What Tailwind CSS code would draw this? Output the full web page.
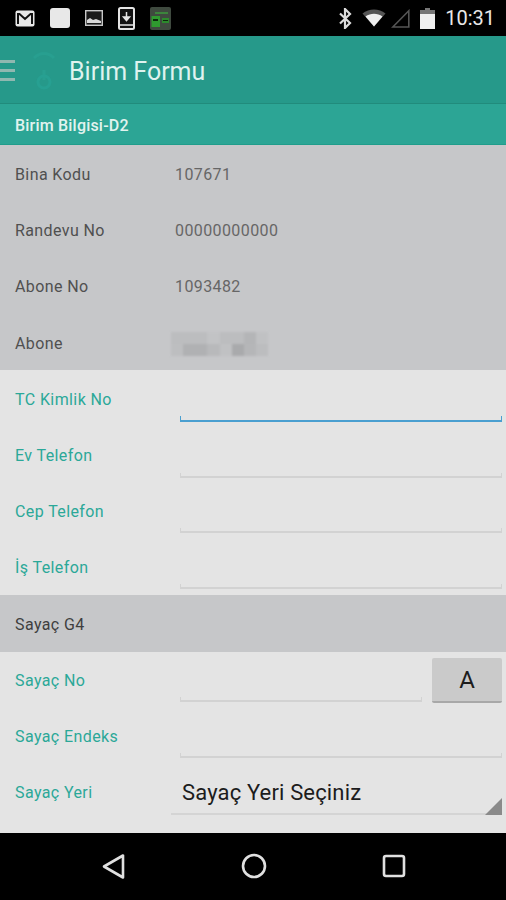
<!DOCTYPE html>
<html lang="tr">
<head>
  <meta charset="UTF-8" />
  <meta name="viewport" content="width=device-width, initial-scale=1.0" />
  <title>Birim Formu</title>
  <script src="https://cdn.jsdelivr.net/npm/@tailwindcss/browser@4"></script>
</head>
<body class="bg-black font-['Roboto',sans-serif] overflow-hidden">
  <div class="w-[506px] h-[900px] flex flex-col">

    <!-- status bar -->
    <div class="h-9 bg-black flex items-center justify-between pl-[15px] pr-[11px] shrink-0">
      <div class="flex items-center gap-[15px]">
        <svg class="w-5 h-[17px]" viewBox="0 0 20 17"><rect x="0.5" y="0.5" width="19" height="16" rx="2" fill="#e8e8e8"/><path d="M3 14V4h1.5L10 9l5.5-5H17v10" fill="none" stroke="#111" stroke-width="2"/></svg>
        <div class="w-5 h-5 rounded-[3px] bg-[#e8e8e8]"></div>
        <svg class="w-[18px] h-4" viewBox="0 0 18 16"><rect x="0.7" y="0.7" width="16.6" height="14.6" fill="#1a1a1a" stroke="#c8c8c8" stroke-width="1.4"/><path d="M2 13V10l3-2 3 2 3-1 5 2v2z" fill="#d8d8d8"/></svg>
        <svg class="w-[17px] h-[23px]" viewBox="0 0 17 23"><rect x="1" y="1" width="15" height="21" rx="1.5" fill="#111" stroke="#e4e4e4" stroke-width="2"/><path d="M8.5 5v6M5.5 10h6l-3 3.5z" fill="#e4e4e4" stroke="#e4e4e4" stroke-width="1.5"/><path d="M2 18h13" stroke="#e4e4e4" stroke-width="1.5"/></svg>
        <svg class="w-[21px] h-[23px]" viewBox="0 0 21 23"><rect width="21" height="23" rx="2" fill="#3f4a3f"/><path d="M5 6h13" stroke="#3c9a3c" stroke-width="1.5"/><rect x="1.5" y="9" width="8.5" height="11" fill="#2f9a2f"/><rect x="12" y="11" width="7" height="5" fill="#2c8a2c"/><path d="M3 13h5" stroke="#0c2a0c" stroke-width="2"/><path d="M13 13.5h5" stroke="#0c2a0c"/></svg>
      </div>
      <div class="flex items-center">
        <svg class="w-[13px] h-[21px] mr-[10px]" viewBox="0 0 13 21"><path d="M1 5.5l10 9.5-5 5V1l5 5-10 9.5" fill="none" stroke="#dcdcdc" stroke-width="2.2"/></svg>
        <svg class="w-6 h-[18px] mr-[5px]" viewBox="0 0 24 18"><path d="M0.5 4.5C7 -0.8 17 -0.8 23.5 4.5L12 17.5z" fill="#555"/><path d="M3.5 7.5c5-3.6 12-3.6 17 0L12 17.5z" fill="#f0f0f0"/></svg>
        <svg class="w-[19px] h-[19px] mr-[10px]" viewBox="0 0 19 19"><path d="M17.8 1.8V18H1.8z" fill="none" stroke="#555" stroke-width="1.6"/></svg>
        <svg class="w-[15px] h-[21px] mr-[10px]" viewBox="0 0 15 21"><path d="M5 0h5v2h5v19H0V2h5z" fill="#777"/><rect y="6" width="15" height="15" fill="#f0f0f0"/></svg>
        <span class="text-[#e8e8e8] text-[20px] leading-none font-normal">10:31</span>
      </div>
    </div>

    <!-- app bar -->
    <header class="h-[68px] bg-[#26998a] flex items-center shrink-0 border-b border-[#218b7c] pt-[2px]">
      <div class="w-[15px] flex flex-col gap-[6px] shrink-0">
        <div class="h-[3px] bg-[#8fb8b0]"></div>
        <div class="h-[3px] bg-[#8fb8b0]"></div>
        <div class="h-[3px] bg-[#8fb8b0]"></div>
      </div>
      <svg class="w-6 h-[42px] ml-[17px] shrink-0" viewBox="0 0 24 42"><path d="M2 8c6-6 14-6 20 0M12 20v10" fill="none" stroke="#289f90" stroke-width="3"/><circle cx="12" cy="32" r="6" fill="none" stroke="#27a092" stroke-width="3"/></svg>
      <h1 class="ml-[13px] pt-[2px] text-[#dff3ef] text-[25px] font-normal leading-none">Birim Formu</h1>
    </header>

    <!-- section title -->
    <div class="h-[41px] bg-[#2ca595] border-b border-[#1f9d8b] flex items-center pl-[15px] pt-[3px] shrink-0">
      <span class="text-[#e2f3ef] text-[16px] font-medium leading-none tracking-[0.2px]">Birim Bilgisi-D2</span>
    </div>

    <main class="flex-1 bg-[#e4e4e4] flex flex-col">
      <section class="bg-[#c6c7c9] h-[225px] grid grid-rows-4">
        <div class="flex items-center pl-[15px] pt-[3px]"><span class="w-[160px] text-[#505050] text-[16px] tracking-[0.4px]">Bina Kodu</span><span class="text-[#666] text-[16px] tracking-[0.4px]">107671</span></div>
        <div class="flex items-center pl-[15px] pt-[3px]"><span class="w-[160px] text-[#505050] text-[16px] tracking-[0.4px]">Randevu No</span><span class="text-[#666] text-[16px] tracking-[0.4px]">00000000000</span></div>
        <div class="flex items-center pl-[15px] pt-[3px]"><span class="w-[160px] text-[#505050] text-[16px] tracking-[0.4px]">Abone No</span><span class="text-[#666] text-[16px] tracking-[0.4px]">1093482</span></div>
        <div class="flex items-center pl-[15px] pt-[4px]">
          <span class="w-[156px] text-[#505050] text-[16px] tracking-[0.4px]">Abone</span>
          <div class="w-[97px] h-6 bg-[#b9babc] grid grid-cols-8 grid-rows-2 blur-[1px]">
            <div class="col-span-3 bg-[#bcbdbf]"></div><div class="bg-[#c2c3c5]"></div><div class="col-span-2 bg-[#bcbdbf]"></div><div class="bg-[#b4b5b7]"></div><div class="bg-[#c0c1c3]"></div>
            <div class="bg-[#bdbec0]"></div><div class="col-span-2 bg-[#b0b1b3]"></div><div class="bg-[#b8b9bb]"></div><div class="bg-[#c0c1c3]"></div><div class="bg-[#a9aaac]"></div><div class="bg-[#b5b6b8]"></div><div class="bg-[#bcbdbf]"></div>
          </div>
        </div>
      </section>

      <section class="h-[225px] grid grid-rows-4">
        <div class="flex items-center pl-[15px] pr-[4px]">
          <span class="w-[165px] text-[#2ba898] text-[16px] tracking-[0.4px] pt-[3px]">TC Kimlik No</span>
          <div class="flex-1 self-end h-[6px] mb-[4px] border-b-2 border-x border-[#4a9fd0]"></div>
        </div>
        <div class="flex items-center pl-[15px] pr-[4px]">
          <span class="w-[165px] text-[#2ba898] text-[16px] tracking-[0.4px] pt-[3px]">Ev Telefon</span>
          <div class="flex-1 self-end h-[5px] mb-[5px] border-b-2 border-x border-[#d2d2d2]"></div>
        </div>
        <div class="flex items-center pl-[15px] pr-[4px]">
          <span class="w-[165px] text-[#2ba898] text-[16px] tracking-[0.4px] pt-[3px]">Cep Telefon</span>
          <div class="flex-1 self-end h-[5px] mb-[6px] border-b-2 border-x border-[#d2d2d2]"></div>
        </div>
        <div class="flex items-center pl-[15px] pr-[4px]">
          <span class="w-[165px] text-[#2ba898] text-[16px] tracking-[0.4px] pt-[3px]">İş Telefon</span>
          <div class="flex-1 self-end h-[5px] mb-[6px] border-b-2 border-x border-[#d2d2d2]"></div>
        </div>
      </section>

      <div class="h-[57px] bg-[#c6c7c9] flex items-center pl-[15px] pt-[2px] shrink-0">
        <span class="text-[#3f3f3f] text-[16px] tracking-[0.4px]">Sayaç G4</span>
      </div>

      <section class="flex-1 grid auto-rows-[56.25px]">
        <div class="flex items-center pl-[15px] pr-[4px]">
          <span class="w-[165px] text-[#2ba898] text-[16px] tracking-[0.4px] pt-[2px]">Sayaç No</span>
          <div class="w-[242px] self-end h-[5px] mb-[6px] border-b-2 border-x border-[#d2d2d2]"></div>
          <button class="ml-[10px] mt-[1px] w-[70px] h-[45px] bg-[#cacaca] border-b-2 border-[#a8a8a8] rounded-[2px] text-[#1d1d1d] text-[24px] leading-none">A</button>
        </div>
        <div class="flex items-center pl-[15px] pr-[4px]">
          <span class="w-[165px] text-[#2ba898] text-[16px] tracking-[0.4px] pt-[2px]">Sayaç Endeks</span>
          <div class="flex-1 self-end h-[5px] mb-[7px] border-b-2 border-x border-[#d2d2d2]"></div>
        </div>
        <div class="flex items-center pl-[15px] pr-[4px]">
          <span class="w-[156px] text-[#2ba898] text-[16px] tracking-[0.4px]">Sayaç Yeri</span>
          <div class="flex-1 h-[45px] border-b-2 border-[#d4d4d4] flex items-center pl-[11px] relative">
            <span class="text-[#1c1c1c] text-[22px] leading-none tracking-[0.15px] pt-[2px]">Sayaç Yeri Seçiniz</span>
            <svg class="absolute right-0 bottom-[-2px] w-[17px] h-[17px]" viewBox="0 0 17 17"><path d="M17 0v17H0z" fill="#8a8a8a"/></svg>
          </div>
        </div>
      </section>
    </main>

    <!-- nav bar -->
    <nav class="h-[67px] bg-black flex items-center justify-between pl-[101px] pr-[100px] shrink-0 pb-[1px]">
      <svg class="w-6 h-[27px]" viewBox="0 0 24 27"><path d="M22 2.5v22L3 13.5z" fill="none" stroke="#e0e0e0" stroke-width="2.6" stroke-linejoin="round"/></svg>
      <svg class="w-[26px] h-[26px]" viewBox="0 0 26 26"><circle cx="13" cy="13" r="11" fill="none" stroke="#e0e0e0" stroke-width="2.6"/></svg>
      <svg class="w-6 h-6" viewBox="0 0 24 24"><rect x="2" y="2" width="20" height="20" rx="2" fill="none" stroke="#e0e0e0" stroke-width="2.6"/></svg>
    </nav>
  </div>
</body>
</html>
